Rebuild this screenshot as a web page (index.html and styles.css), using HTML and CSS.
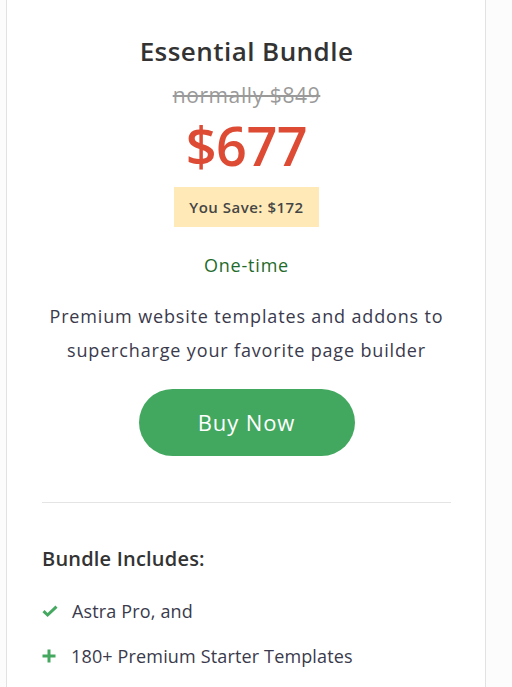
FILE: index.html
```html
<!DOCTYPE html>
<html lang="en">
<head>
<meta charset="utf-8">
<title>Essential Bundle</title>
<link rel="stylesheet" href="styles.css">
</head>
<body>
<div class="page">
  <section class="card">
    <h2 class="title">Essential Bundle</h2>
    <div class="old-price">normally $849</div>
    <div class="price">$677</div>
    <div class="save">You Save: $172</div>
    <div class="term">One-time</div>
    <p class="desc">Premium website templates and addons to supercharge your favorite page builder</p>
    <a class="buy" href="#">Buy Now</a>
    <hr class="sep">
    <h3 class="includes">Bundle Includes:</h3>
    <ul class="list">
      <li class="item">
        <svg class="icon" viewBox="0 0 16 16" width="16" height="16"><path d="M1.5 8.2 L5.6 12 L14.5 3.6" fill="none" stroke="#45a860" stroke-width="3"/></svg>
        <span class="item-text check-text">Astra Pro, and</span>
      </li>
      <li class="item">
        <svg class="icon" viewBox="0 0 14 14" width="14" height="14"><path d="M7 0.5 V13.5 M0.5 7 H13.5" fill="none" stroke="#45a860" stroke-width="3"/></svg>
        <span class="item-text">180+ Premium Starter Templates</span>
      </li>
    </ul>
  </section>
</div>
</body>
</html>
```
FILE: styles.css
```css
html, body {
  margin: 0;
  padding: 0;
  background: #fcfcfc;
}
body {
  font-family: "Open Sans", "Noto Sans", sans-serif;
  color: #3a3a48;
}
.page {
  padding: 0 26px 0 6px;
}
.card {
  background: #ffffff;
  border-left: 1px solid #e2e2e2;
  border-right: 1px solid #e2e2e2;
  padding: 32px 34px 0 35px;
  display: flex;
  flex-direction: column;
  align-items: center;
  text-align: center;
  min-height: 100vh;
  box-sizing: border-box;
}
.title {
  margin: 0;
  font-size: 26px;
  font-weight: 600;
  line-height: 38px;
  letter-spacing: 0.45px;
  color: #333333;
}
.old-price {
  margin-top: 10px;
  font-size: 21px;
  line-height: 30px;
  letter-spacing: 0.6px;
  color: #9a9a9a;
  text-decoration: line-through;
}
.price {
  margin-top: 3px;
  font-size: 54px;
  font-weight: 600;
  line-height: 64px;
  color: #dd4b34;
  letter-spacing: -0.5px;
}
.save {
  margin-top: 10px;
  background: #ffeab7;
  padding: 0 15px;
  height: 40px;
  line-height: 40px;
  font-size: 15px;
  font-weight: 600;
  letter-spacing: 0.5px;
  color: #454545;
}
.term {
  margin-top: 25px;
  font-size: 18px;
  line-height: 26px;
  letter-spacing: 0.8px;
  color: #1f6b2c;
}
.desc {
  margin: 21px 0 0;
  font-size: 18px;
  line-height: 34px;
  letter-spacing: 0.85px;
  color: #3a3a4c;
}
.buy {
  margin-top: 22px;
  width: 216px;
  height: 67px;
  border-radius: 34px;
  background: #42a85f;
  color: #ffffff;
  font-size: 22px;
  line-height: 67px;
  letter-spacing: 0.9px;
  text-decoration: none;
}
.sep {
  align-self: stretch;
  margin: 46px 0 0;
  border: 0;
  border-top: 1px solid #e4e4e4;
}
.includes {
  align-self: flex-start;
  margin: 43px 0 0;
  font-size: 20px;
  font-weight: 600;
  line-height: 26px;
  letter-spacing: 0.2px;
  color: #333333;
}
.list {
  align-self: stretch;
  list-style: none;
  margin: 16px 0 0;
  padding: 0;
  text-align: left;
}
.item {
  display: flex;
  align-items: center;
  height: 45px;
  font-size: 18px;
  letter-spacing: 0.15px;
  color: #3a3a4c;
}
.icon {
  flex: none;
}
.item-text {
  margin-left: 15px;
}
.check-text {
  margin-left: 14px;
}
```
